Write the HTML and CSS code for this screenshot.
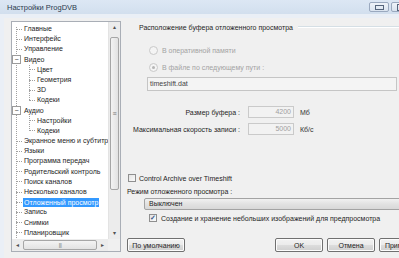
FILE: index.html
```html
<!DOCTYPE html>
<html lang="ru">
<head>
    <meta charset="UTF-8">
    <title>Настройки ProgDVB</title>
    <link rel="stylesheet" href="styles.css">
</head>
<body>
    <div class="titlebar">
        <span class="title">Настройки ProgDVB</span>
        <div class="win-buttons">
            <span class="win-btn"><span class="min-glyph"></span></span>
            <span class="win-btn"><span class="max-glyph"></span></span>
        </div>
    </div>

    <div class="client">
        <div class="tree">
            <div class="tree-list">
                <div class="node">Главные</div>
                <div class="node">Интерфейс</div>
                <div class="node">Управление</div>
                <div class="node parent">Видео</div>
                <div class="group">
                    <div class="node child">Цвет</div>
                    <div class="node child">Геометрия</div>
                    <div class="node child">3D</div>
                    <div class="node child">Кодеки</div>
                </div>
                <div class="node parent">Аудио</div>
                <div class="group">
                    <div class="node child">Настройки</div>
                    <div class="node child">Кодеки</div>
                </div>
                <div class="node">Экранное меню и субтитры</div>
                <div class="node">Языки</div>
                <div class="node">Программа передач</div>
                <div class="node">Родительский контроль</div>
                <div class="node">Поиск каналов</div>
                <div class="node">Несколько каналов</div>
                <div class="node"><span class="selected">Отложенный просмотр</span></div>
                <div class="node">Запись</div>
                <div class="node">Снимки</div>
                <div class="node">Планировщик</div>
                <div class="node">Модули</div>
            </div>
            <div class="vscroll">
                <span class="arrow">&#9652;</span>
                <div class="vtrack"><div class="vthumb">&#8801;</div></div>
                <span class="arrow">&#9662;</span>
            </div>
            <div class="hscroll">
                <span class="arrow">&#9666;</span>
                <div class="htrack"><div class="hthumb">|||</div></div>
                <span class="arrow">&#9656;</span>
            </div>
            <div class="corner"></div>
        </div>

        <div class="settings">
            <div class="section-head">
                <span>Расположение буфера отложенного просмотра</span>
                <span class="rule"></span>
            </div>

            <div class="radio-row disabled first">
                <span class="radio"></span>
                <span>В оперативной памяти</span>
            </div>
            <div class="radio-row disabled">
                <span class="radio checked"></span>
                <span>В файле по следующему пути :</span>
            </div>
            <div class="path-field">timeshift.dat</div>

            <div class="field-row first">
                <span class="field-label">Размер буфера :</span>
                <span class="num-field">4200</span>
                <span class="unit">Мб</span>
            </div>
            <div class="field-row">
                <span class="field-label">Максимальная скорость записи :</span>
                <span class="num-field">5000</span>
                <span class="unit">Кб/с</span>
            </div>

            <div class="check-row archive">
                <span class="checkbox"></span>
                <span>Control Archive over Timeshift</span>
            </div>
            <div class="mode-label">Режим отложенного просмотра :</div>
            <div class="combo">Выключен</div>
            <div class="check-row preview">
                <span class="checkbox checked">&#10003;</span>
                <span>Создание и хранение небольших изображений для предпросмотра</span>
            </div>

            <div class="footer">
                <button class="btn default-btn">По умолчанию</button>
                <div class="footer-right">
                    <button class="btn">OK</button>
                    <button class="btn">Отмена</button>
                    <button class="btn">Применить</button>
                </div>
            </div>
        </div>
    </div>
</body>
</html>
```

FILE: styles.css
```css
body {
    margin: 0;
    width: 399px;
    height: 258px;
    overflow: hidden;
    background: #eaeff6;
    font-family: 'Liberation Sans', Arial, sans-serif;
    font-size: 7px;
    color: #1e1e1e;
    display: flex;
    flex-direction: column;
}

.titlebar {
    height: 14px;
    flex: none;
    display: flex;
    align-items: center;
    justify-content: space-between;
    background: linear-gradient(#dce7f4, #d2dfee);
    padding-left: 7px;
}

.title {
    color: #2b3a4d;
    font-size: 7.5px;
}

.win-buttons {
    display: flex;
    gap: 2px;
    margin-right: -12px;
    align-self: flex-start;
    margin-top: 2px;
}

.win-btn {
    width: 20px;
    height: 10px;
    border: 1px solid #9aa9bf;
    border-radius: 2px;
    background: linear-gradient(#eef3f9, #d9e3ef);
    display: flex;
    align-items: center;
    justify-content: center;
    box-sizing: border-box;
}

.min-glyph {
    width: 7px;
    height: 3px;
    border: 1px solid #55657c;
    margin-top: 1px;
}

.max-glyph {
    width: 7px;
    height: 5px;
    border: 1px solid #55657c;
}

.client {
    flex: 1;
    min-height: 0;
    display: flex;
    gap: 6px;
    background: #f0f0f0;
    margin: 4px 0 0 4px;
    padding: 3px 0 6px 7px;
}

/* tree on the left */
.tree {
    width: 108px;
    flex: none;
    border: 1px solid #a9aeb6;
    background: #fff;
    display: grid;
    grid-template-columns: minmax(0, 1fr) 12px;
    grid-template-rows: minmax(0, 1fr) 12px;
    overflow: hidden;
}

.tree-list {
    min-height: 0;
    overflow: hidden;
    white-space: nowrap;
    padding-top: 2px;
    background-image: repeating-linear-gradient(to bottom, #a0a0a0 0 1px, transparent 1px 2px);
    background-size: 1px 100%;
    background-position: 4px 5px;
    background-repeat: no-repeat;
}

.node {
    height: 10.2px;
    line-height: 10.2px;
    padding-left: 4px;
    display: flex;
    align-items: center;
}

.node::before {
    content: '';
    width: 6px;
    height: 0;
    border-top: 1px dotted #a0a0a0;
    margin-right: 2px;
    flex: none;
}

.node.parent::before {
    content: '\2212';
    width: 7px;
    height: 7px;
    border: 1px solid #9b9b9b;
    background: #fff;
    margin-left: -4px;
    margin-right: 3px;
    font-size: 7px;
    line-height: 7px;
    text-align: center;
    color: #333;
}

.group {
    background-image: repeating-linear-gradient(to bottom, #a0a0a0 0 1px, transparent 1px 2px);
    background-size: 1px calc(100% - 5px);
    background-position: 17px 0;
    background-repeat: no-repeat;
}

.node.child {
    padding-left: 17px;
}

.selected {
    background: #3399ff;
    color: #fff;
    padding: 0 1px;
    margin-left: -1px;
    line-height: 9px;
}

.vscroll {
    grid-row: 1;
    grid-column: 2;
    background: #ececec;
    border-left: 1px solid #e3e3e3;
    display: flex;
    flex-direction: column;
    align-items: center;
}

.vscroll .arrow,
.hscroll .arrow {
    flex: none;
    width: 11px;
    height: 11px;
    font-size: 6px;
    line-height: 11px;
    text-align: center;
    color: #505050;
}

.vtrack {
    flex: 1;
    width: 100%;
    padding: 4px 1px 38px;
    box-sizing: border-box;
    display: flex;
}

.vthumb {
    flex: 1;
    border: 1px solid #a6a6a6;
    border-radius: 2px;
    background: linear-gradient(to right, #f3f3f3, #e2e2e2);
    display: flex;
    align-items: center;
    justify-content: center;
    font-size: 7px;
    color: #777;
}

.hscroll {
    grid-row: 2;
    grid-column: 1;
    background: #ececec;
    display: flex;
    align-items: center;
}

.htrack {
    flex: 1;
    height: 100%;
    padding: 1px 0;
    box-sizing: border-box;
    display: flex;
}

.hthumb {
    flex: 1;
    border: 1px solid #a6a6a6;
    border-radius: 2px;
    background: linear-gradient(#f3f3f3, #e2e2e2);
    display: flex;
    align-items: center;
    justify-content: center;
    font-size: 5px;
    color: #777;
    letter-spacing: -0.5px;
}

.corner {
    background: #f0f0f0;
}

/* settings on the right */
.settings {
    flex: 1;
    display: flex;
    flex-direction: column;
    white-space: nowrap;
    min-width: 0;
}

.section-head {
    height: 12px;
    display: flex;
    align-items: center;
    gap: 5px;
    padding-left: 12px;
}

.rule {
    flex: 1;
    height: 0;
    border-top: 1px solid #d5dfe5;
    border-bottom: 1px solid #fff;
}

.radio-row {
    height: 12px;
    display: flex;
    align-items: center;
    padding-left: 22px;
    margin-top: 5px;
}

.radio-row.first {
    margin-top: 11px;
}

.disabled {
    color: #a3a3a3;
}

.radio {
    width: 7px;
    height: 7px;
    border: 1px solid #c9c9c9;
    border-radius: 50%;
    background: #f4f4f4;
    margin-right: 4px;
    display: flex;
    align-items: center;
    justify-content: center;
}

.radio.checked::after {
    content: '';
    width: 3px;
    height: 3px;
    border-radius: 50%;
    background: #b5b5b5;
}

.path-field {
    margin: 4px 2px 0 20px;
    height: 14px;
    box-sizing: border-box;
    border: 1px solid #c5c5c5;
    background: #f4f4f4;
    color: #444;
    padding-left: 2px;
    line-height: 12px;
}

.field-row {
    height: 12px;
    display: flex;
    align-items: center;
    margin-top: 5px;
}

.field-row.first {
    margin-top: 15px;
}

.field-label {
    width: 113px;
    text-align: right;
}

.num-field {
    margin-left: 8px;
    width: 46px;
    height: 12px;
    box-sizing: border-box;
    border: 1px solid #cacaca;
    background: #f2f2f2;
    color: #a0a0a0;
    text-align: right;
    padding-right: 2px;
    line-height: 10px;
}

.unit {
    margin-left: 6px;
    color: #333;
}

.check-row {
    height: 12px;
    display: flex;
    align-items: center;
}

.check-row.archive {
    margin-top: 37px;
    padding-left: 1px;
}

.check-row.archive .checkbox {
    margin-right: 3px;
}

.checkbox {
    width: 8px;
    height: 8px;
    box-sizing: border-box;
    border: 1px solid #8f8f8f;
    background: linear-gradient(135deg, #e4e4e4, #fafafa);
    margin-right: 4px;
    font-size: 7px;
    line-height: 6px;
    text-align: center;
    color: #3b5b8c;
    font-weight: bold;
}

.mode-label {
    height: 10px;
    line-height: 10px;
    margin-top: 3px;
}

.combo {
    margin: 1px -6px 0 17px;
    height: 12px;
    box-sizing: border-box;
    border: 1px solid #a3a3a3;
    border-radius: 2px;
    background: linear-gradient(#f1f1f1, #e2e2e2 50%, #d8d8d8);
    padding-left: 4px;
    line-height: 10px;
}

.check-row.preview {
    margin-top: 2px;
    padding-left: 22px;
}

.footer {
    margin-top: auto;
    display: flex;
    justify-content: space-between;
}

.footer-right {
    display: flex;
    gap: 4px;
    margin-right: -28px;
}

.btn {
    font: inherit;
    color: #1e1e1e;
    height: 14px;
    width: 48px;
    padding: 0;
    border: 1px solid #707070;
    border-radius: 2px;
    background: linear-gradient(#f2f2f2, #ebebeb 50%, #dddddd 51%, #cfcfcf);
    box-shadow: inset 0 0 0 1px #fcfcfc;
}

.default-btn {
    width: 58px;
}
```
